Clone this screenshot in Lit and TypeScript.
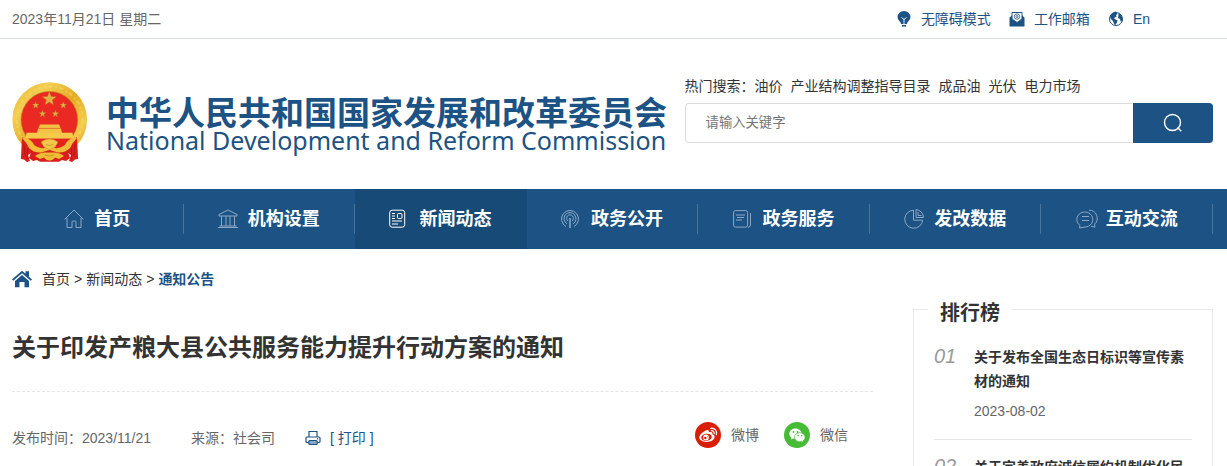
import { LitElement, html, css, svg } from "lit";
import { customElement } from "lit/decorators.js";

const star = (cx: number, cy: number, r: number) => {
  const pts: string[] = [];
  for (let i = 0; i < 10; i++) {
    const a = -Math.PI / 2 + (i * Math.PI) / 5;
    const q = i % 2 ? r * 0.42 : r;
    pts.push(`${(cx + q * Math.cos(a)).toFixed(2)},${(cy + q * Math.sin(a)).toFixed(2)}`);
  }
  return svg`<polygon points=${pts.join(" ")} fill="#e0b040" stroke="#b8742a" stroke-width=".3"/>`;
};

const emblem = html`<svg class="emblem" viewBox="0 0 76 80" aria-hidden="true">
  <defs>
    <linearGradient id="gold" x1="0" y1="0" x2="1" y2="1">
      <stop offset="0" stop-color="#e8b32c" /><stop offset=".25" stop-color="#f3cf52" />
      <stop offset=".5" stop-color="#e5ab25" /><stop offset=".75" stop-color="#f4cc4c" />
      <stop offset="1" stop-color="#dda020" />
    </linearGradient>
  </defs>
  <circle cx="37.7" cy="37.600" r="37.400" fill="url(#gold)" />
  <circle cx="37.700" cy="37.600" r="33" fill="none" stroke="#f8dc6c" stroke-width="2" stroke-dasharray="4 3 2 2" opacity=".5" />
  <circle cx="37.400" cy="37.800" r="28.400" fill="#ea2a22" stroke="#c08a1c" stroke-width=".6" />
  ${star(37.3, 17, 7.400)}${star(23.7, 23.300, 3.500)}${star(51.300, 23.300, 3.500)}${star(30.500, 31.800, 3.500)}${star(43.400, 31.800, 3.500)}
  <path d="M28 42.500h19l1.500 3.500h-22zM26 46.500h23l1 4.500H25z" fill="#f3c244" />
  <path d="M14.500 50.800h46l1 6H13.500z" fill="#f5c949" />
  <path d="M26.500 46.200h22" stroke="#d08a24" stroke-width=".5" />
  <path d="M12 56.800h51l-2 14H14z" fill="#e2241f" />
  <path d="M10 55l8 6 4 8-6 4 2 6-3 1-3-2.500-3-.5v-2z" fill="#d81f1c" />
  <path d="M65 55l-8 6-4 8 6 4-2 6 3 1 3-2.500 3-.5v-2z" fill="#d81f1c" />
  <path d="M20 67l9-1h17l9 1 3 9-4 3-4-1-3 1.800H28L25 78l-4 1-4-3z" fill="#d81f1c" />
  <path d="M13 55q7 3 9 8 5 4 10 3l5.500-2.500L43 66q5 1 10-3 2-5 9-8l3 1q-5 5-7 10-5 5-12 4.500L37.500 68 29 70.500Q22 71 17 66q-2-5-7-10z" fill="#f1bd38" />
  <path d="M29 60q4-3 8.500-3t8.500 3l-3 5-5.500 2.500L32 65z" fill="#f4c849" stroke="#c98f28" stroke-width=".5" />
  <path d="M23 74q5-4 11-3.500h7q6-.5 11 3.500l-5 3-4-1.500q-2 3-5.500 3T32 75.500L28 77z" fill="#f0bb35" />
  <path d="M34 62.500q3.500 2 7 0M33 73q4.500 2 9 0" fill="none" stroke="#b87820" stroke-width=".6" />
  <path d="M12 62l1 12M15.500 66v11M63 62l-1 12M59.500 66v11" stroke="#b01214" stroke-width=".7" />
</svg>`;

const navIcons = [
  svg`<path d="M.5 10.500L10 1l9.500 9.500M3 9v9.500h5V13q0-1 1-1h2q1 0 1 1v5.500h5V9"/>`,
  svg`<path d="M1 5.500L10 1l9 4.500V7H1zM3.500 7v10M8 7v10M12 7v10M16.500 7v10M1.500 17h17M0 18.500h20"/>`,
  svg`<rect x=".7" y="1.200" width="15" height="17" rx="2.500"/><rect x="8.500" y="4.500" width="4.500" height="5" rx="1"/><path d="M3 4.500h3M3 7h3M3 9.500h3M3 12h10M3 15h6"/>`,
  svg`<path d="M5 17.500a8.500 8.500 0 1 1 8 0M6 14.800a6 6 0 1 1 6 0M7 12a3.400 3.400 0 1 1 4 0"/><path d="M9 9v10" stroke-width="1.500"/>`,
  svg`<rect x=".6" y="1.600" width="14" height="16.500" rx="2"/><path d="M3 6h9M4 8.500h7M3 11h6M17.500 4v12q0 2-2.500 2.300"/>`,
  svg`<path d="M9.500 1.200a9 9 0 1 0 9.200 10H9.500z"/><path d="M12 .6V8.500h7.500A8 8 0 0 0 12 .6zM14 3v3.500h3.500"/>`,
  svg`<path d="M4 16.500A8 7.500 0 1 1 9 18l-5.500 1z"/><path d="M6 7.500h7M6 11.500h7M13 1.200a8 8 0 0 1 5.500 14l.5 3-4-1"/>`,
];

const navItems = ["首页", "机构设置", "新闻动态", "政务公开", "政务服务", "发改数据", "互动交流"];
const hotWords = ["油价", "产业结构调整指导目录", "成品油", "光伏", "电力市场"];
const ranking = [
  { no: "01", title: "关于发布全国生态日标识等宣传素材的通知", date: "2023-08-02" },
  { no: "02", title: "关于完善政府诚信履约机制优化民营经济发展环境的通知", date: "" },
];

@customElement("app-root")
export class AppRoot extends LitElement {
  static styles = css`
    :host {
      display: block;
      height: 100vh;
      overflow-y: auto;
      scrollbar-width: none;
      background: #fff;
      color: #333;
      font: 14px/24px "Liberation Sans", "Noto Sans CJK SC", sans-serif;
    }
    * { box-sizing: border-box; }
    a { color: inherit; text-decoration: none; }
    h1, h2, p, ol, ul { margin: 0; padding: 0; list-style: none; }
    svg { display: block; flex: none; }
    .wrap { padding: 0 14px 0 12px; }

    .topbar { border-bottom: 1px solid #d3dbe6; }
    .topbar-row { display: flex; justify-content: space-between; align-items: center; height: 38px; color: #666; }
    .tools { display: flex; gap: 18px; padding-right: 63px; color: #1c5384; }
    .tool { display: flex; align-items: center; gap: 9px; }

    .header { display: flex; justify-content: space-between; height: 150px; }
    .brand { display: flex; align-items: center; gap: 18px; padding-top: 16px; color: #1c5384; }
    .emblem { width: 76px; height: 80px; }
    .brand-text { padding-top: 6px; white-space: nowrap; }
    .brand-cn { display: block; font-size: 33px; line-height: 30px; font-weight: 700; }
    .brand-en { display: block; font-family: "Noto Sans", sans-serif; font-size: 25px; line-height: 22px; }
    .search { width: 44%; padding-top: 35px; }
    .hot { display: flex; }
    .hot-list { display: flex; gap: 8px; }
    .form { display: flex; height: 40px; margin-top: 5px; }
    .field { flex: 1; min-width: 0; border: 1px solid #dcdcdc; border-right: 0; border-radius: 4px 0 0 4px; padding: 0 20px 2px; font-family: inherit; outline: 0; }
    .field::placeholder { color: #757575; }
    .go { width: 80px; margin-left: 1px; border: 0; border-radius: 0 4px 4px 0; background: #1c5384; display: grid; place-items: center; padding: 0; }

    .nav { background: #1c5384; color: #fff; }
    .nav-list { display: flex; }
    .nav-item { flex: 1; }
    .nav-link { display: flex; align-items: center; height: 60px; font-size: 18px; font-weight: 700; }
    .nav-inner { flex: 1; display: flex; align-items: center; justify-content: center; gap: 10px; height: 30px; border-right: 1px solid #49759d; }
    .nav-icon { fill: none; stroke: #8ba9c5; overflow: visible; }
    .active { background: #174a77; }
    .active .nav-inner { border-color: transparent; }
    .active .nav-icon { stroke: #fff; }

    .columns { display: flex; gap: 40px; }
    .article { flex: 1; min-width: 0; }
    .crumbs { display: flex; align-items: center; gap: 4px; padding-top: 18px; }
    .crumb-icon { margin-right: 6px; }
    .crumb-now { color: #1c5384; font-weight: 700; }
    .title { padding: 39px 0 25px; font-size: 24px; line-height: 36px; border-bottom: 1px dashed #e6e6e6; }
    .meta { display: flex; align-items: flex-end; height: 58px; padding-top: 30px; color: #666; }
    .source { margin-left: 40px; }
    .print { display: flex; align-items: center; gap: 9px; margin-left: 30px; padding: 0; border: 0; background: none; font: inherit; color: #1c5384; }
    .share { display: flex; gap: 25px; align-self: flex-start; margin-left: auto; padding-right: 25px; }
    .share-link { display: flex; align-items: center; gap: 10px; }

    .rank { width: 300px; margin-top: 60px; padding: 0 20px; border: 1px solid #e9e9e9; }
    .rank-title { width: fit-content; margin: -12px 0 2px -6px; padding: 0 12px; font-size: 20px; line-height: 30px; background: #fff; }
    .rank-item { display: flex; padding: 15px 0 16px; border-bottom: 1px solid #e6e6e6; }
    .rank-no { width: 40px; flex: none; font-size: 20px; line-height: 22px; font-style: italic; color: #999; }
    .rank-name { font-weight: 700; }
    .rank-date { margin-top: 6px; color: #666; }
  `;

  render() {
    return html`
      <div class="topbar">
        <div class="wrap topbar-row">
          <span>2023年11月21日 星期二</span>
          <div class="tools">
            <a class="tool" href="#"><svg width="16" height="18" viewBox="0 0 16 18" fill="#1c5384"><path d="M8 1a6.500 6 0 0 0-6.500 6q0 2.500 2 4.300Q5 12.200 5 14h6q0-1.800 1.500-2.700 2-1.800 2-4.300A6.500 6 0 0 0 8 1zM6 15h4v1.500H6z" /><path d="M5.500 7.500L8 9.500l2.500-2M8 9.500V14" fill="none" stroke="#fff" stroke-width=".9" /></svg>无障碍模式</a>
            <a class="tool" href="#"><svg width="16" height="18" viewBox="0 0 16 18"><path d="M.5 7.500L3 5.500v3l5 3.500 5-3.500v-3l2.500 2V16.500H.5z" fill="#1c5384" /><path d="M3 9V2.500h10V9l-5 3.500z" fill="#fff" stroke="#1c5384" /><circle cx="8" cy="6.500" r="2.700" fill="none" stroke="#1c5384" stroke-width=".8" /><circle cx="8" cy="6.500" r="1" fill="none" stroke="#1c5384" stroke-width=".8" /></svg>工作邮箱</a>
            <a class="tool" href="#"><svg width="16" height="18" viewBox="0 0 16 18"><circle cx="8" cy="9" r="6.500" fill="#fff" stroke="#1c5384" /><path d="M2 6q2-4 6-4.500L9.500 4 8 5l.5 1.500L6 8l1.500 1.500 2 1L9 12.500 7 15.200Q5.500 13 5 11L2.500 8.500zM10.500 3l2.500 1.500 1.500 4-.5 3.500-1.500-1-.5-2-2-1 .5-2.500z" fill="#1c5384" /></svg>En</a>
          </div>
        </div>
      </div>

      <header class="wrap header">
        <a class="brand" href="#">${emblem}<span class="brand-text"><span class="brand-cn">中华人民共和国国家发展和改革委员会</span><span class="brand-en">National Development and Reform Commission</span></span></a>
        <div class="search">
          <div class="hot"><span>热门搜索：</span><div class="hot-list">${hotWords.map((w) => html`<a href="#">${w}</a>`)}</div></div>
          <form class="form" @submit=${(e: Event) => e.preventDefault()}>
            <input class="field" type="text" aria-label="热门搜索" placeholder="请输入关键字" />
            <button class="go" aria-label="搜索"><svg width="20" height="20" viewBox="0 0 20 20" fill="none" stroke="#fff" stroke-width="1.400"><circle cx="9.500" cy="9.500" r="8" /><path d="M14.500 14.500l3.800 3.800" /></svg></button>
          </form>
        </div>
      </header>

      <nav class="nav">
        <ul class="wrap nav-list">
          ${navItems.map((t, i) => html`<li class="nav-item"><a class="nav-link ${i === 2 ? "active" : ""}" href="#"><span class="nav-inner"><svg class="nav-icon" width="20" height="20" viewBox="0 0 20 20">${navIcons[i]}</svg>${t}</span></a></li>`)}
        </ul>
      </nav>

      <main class="wrap columns">
        <article class="article">
          <div class="crumbs">
            <svg class="crumb-icon" width="20" height="18" viewBox="0 0 20 18" fill="#1c5384"><path d="M0 9.500L10 .8l3.500 3V1.200H17v5.600l3 2.700-1.200 1.300L10 3.200 1.200 10.800zM3 11l7-6 7 6v6.200h-4.500V12h-5v5.200H3z" /></svg>
            <a href="#">首页</a><span>&gt;</span><a href="#">新闻动态</a><span>&gt;</span><a class="crumb-now" href="#">通知公告</a>
          </div>
          <h1 class="title">关于印发产粮大县公共服务能力提升行动方案的通知</h1>
          <div class="meta">
            <span>发布时间：2023/11/21</span>
            <span class="source">来源：社会司</span>
            <button class="print"><svg width="16" height="16" viewBox="0 0 16 16" fill="none" stroke="#1c5384" stroke-width="1.200"><path d="M4 7V1.500h8V7M3.500 12.500H2q-1 0-1-1V8q0-1 1-1h12q1 0 1 1v3.500q0 1-1 1h-1.500" /><rect x="3.800" y="10.500" width="8.400" height="4" rx="1" fill="#8ba9c5" /><path d="M12 8.800h1.200" /></svg><span>[ 打印 ]</span></button>
            <div class="share">
              <a class="share-link" href="#"><svg width="26" height="26" viewBox="0 0 26 26"><circle cx="13" cy="13" r="13" fill="#d81e06" /><path d="M11.500 8.200c1.700-.8 2.700 0 2.200 2.100 2.400-.9 4.300-.2 3.600 2 1.500.5 2.500 1.400 2.300 2.900-.4 2.800-4 4.700-8 4.700-4.200 0-7.300-1.800-7.300-4.600 0-2.400 4-6 7.200-7.100z" fill="#fff" /><ellipse cx="11.500" cy="15.200" rx="5.300" ry="3.500" fill="#d81e06" transform="rotate(-8 11.500 15.200)" /><circle cx="11" cy="15.400" r="2.900" fill="#fff" /><circle cx="10.300" cy="16" r="1.200" fill="#d81e06" /><circle cx="12.300" cy="14.700" r=".5" fill="#d81e06" /><path d="M15.800 6.300a5 5 0 0 1 5.600 6.500M16.300 8.700a2.500 2.500 0 0 1 2.800 3.200" fill="none" stroke="#fff" stroke-width="1.200" stroke-linecap="round" /></svg>微博</a>
              <a class="share-link" href="#"><svg width="26" height="26" viewBox="0 0 26 26"><circle cx="13" cy="13" r="13" fill="#46bb36" /><path d="M11.500 6.500c-3.600 0-6.200 2.300-6.200 5.200 0 1.700.9 3 2.300 4L7 17.500l2.200-1.100q1.200.3 2.300.3l6-6c-.6-2.500-3-4.200-6-4.200z" fill="#fff" /><path d="M15.800 10.700c-3.100 0-5.300 2-5.300 4.500s2.200 4.500 5.300 4.500l1.800-.3 1.900 1-.5-1.700c1.300-.9 2.100-2.100 2.100-3.500 0-2.500-2.300-4.500-5.300-4.500z" fill="#fff" stroke="#46bb36" stroke-width=".7" /><g fill="#46bb36"><circle cx="9.500" cy="10" r=".9" /><circle cx="13.600" cy="10" r=".9" /><circle cx="14.200" cy="13.800" r=".8" /><circle cx="17.600" cy="13.800" r=".8" /></g></svg>微信</a>
            </div>
          </div>
        </article>

        <aside class="rank">
          <h2 class="rank-title">排行榜</h2>
          <ol>
            ${ranking.map((r) => html`<li class="rank-item"><span class="rank-no">${r.no}</span><div><a class="rank-name" href="#">${r.title}</a>${r.date ? html`<p class="rank-date">${r.date}</p>` : ""}</div></li>`)}
          </ol>
        </aside>
      </main>
    `;
  }
}
